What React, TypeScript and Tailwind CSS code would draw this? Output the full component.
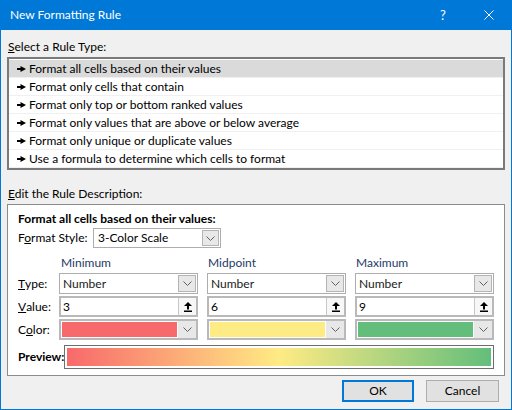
import React from 'react';

const ListArrow = () => (
  <svg width="9" height="6" viewBox="0 0 9 6" className="shrink-0">
    <rect x="0" y="2" width="4" height="2" fill="#000" />
    <path d="M3.5 0L9 3L3.5 6Z" fill="#000" />
  </svg>
);

const Chevron = () => (
  <svg width="9" height="5" viewBox="0 0 9 5">
    <path d="M0.5 0.5L4.5 4.5L8.5 0.5" fill="none" stroke="#606060" strokeWidth="1" />
  </svg>
);

const UpIcon = () => (
  <svg width="8" height="10" viewBox="0 0 8 10">
    <path d="M4 0L8 4H5V7.5H3V4H0Z" fill="#000" />
    <rect x="0" y="8.5" width="8" height="1.5" fill="#000" />
  </svg>
);

const Combo = ({ text }: { text: string }) => (
  <div className="flex h-[21px] items-stretch border border-[#adadad] bg-white">
    <div className="flex flex-1 items-center pl-[3px] text-[#1a1a1a]">{text}</div>
    <div className="m-[1px] flex w-[18px] items-center justify-center border border-[#b4b4b4] bg-[#e8e8e8]">
      <Chevron />
    </div>
  </div>
);

const ValueField = ({ text }: { text: string }) => (
  <div className="flex h-[21px] items-stretch border-2 border-[#b9b9b9] bg-white">
    <div className="flex flex-1 items-center pl-[2px]">{text}</div>
    <div className="flex w-[18px] items-center justify-center border-l border-[#c8c8c8] bg-[#f7f7f7]">
      <UpIcon />
    </div>
  </div>
);

const ColorField = ({ color }: { color: string }) => (
  <div className="flex h-[21px] items-stretch border-2 border-[#b9b9b9] bg-white">
    <div className="flex-1 p-[1px]">
      <div className={`h-full w-full ${color}`} />
    </div>
    <div className="flex w-[18px] items-center justify-center bg-[#e8e8e8]">
      <Chevron />
    </div>
  </div>
);

const rules = [
  'Format all cells based on their values',
  'Format only cells that contain',
  'Format only top or bottom ranked values',
  'Format only values that are above or below average',
  'Format only unique or duplicate values',
  'Use a formula to determine which cells to format',
];

export default function App() {
  return (
    <div className="flex h-[410px] w-[512px] flex-col border-x border-b border-[#0078d7] bg-[#f0f0f0] font-['Lato',sans-serif] text-[12px] leading-[16px] text-black">
      {/* title bar */}
      <div className="-mx-px flex h-[30px] shrink-0 items-center bg-[#0078d7] text-white">
        <div className="flex-1 pl-[10px] text-[12px]">New Formatting Rule</div>
        <div className="flex h-full w-[46px] items-center justify-center text-[13px]">?</div>
        <div className="flex h-full w-[46px] items-center justify-center">
          <svg width="10" height="10" viewBox="0 0 10 10">
            <path d="M0.5 0.5L9.5 9.5M9.5 0.5L0.5 9.5" stroke="#fff" strokeWidth="1" />
          </svg>
        </div>
      </div>

      <div className="flex flex-1 flex-col px-[6px]">
        <div className="mt-[9px] h-[16px] pl-[1px]">
          <span className="underline">S</span>elect a Rule Type:
        </div>
        <div className="mt-[2px] border-2 border-[#7a7a7a] bg-white pt-[1px]">
          {rules.map((r, i) => (
            <div
              key={r}
              className={`flex h-[18px] items-center gap-[3px] border-b border-[#f0f0f0] pl-[8px] ${i === 0 ? 'bg-[#dadada]' : ''}`}
            >
              <ListArrow />
              <span>{r}</span>
            </div>
          ))}
        </div>

        <div className="mt-[16px] h-[16px] pl-[1px]">
          <span className="underline">E</span>dit the Rule Description:
        </div>
        <div className="mt-[2px] border border-[#8c8c8c] bg-white px-[10px] pb-[6px] pt-[6px]">
          <div className="h-[16px] font-bold">Format all cells based on their values:</div>
          <div className="mt-[1px] flex h-[20px] items-center">
            <div className="w-[75px]">
              F<span className="underline">o</span>rmat Style:
            </div>
            <div className="w-[128px]">
              <div className="flex h-[20px] items-stretch border border-[#adadad] bg-white">
                <div className="flex flex-1 items-center pl-[4px]">3-Color Scale</div>
                <div className="m-[1px] flex w-[17px] items-center justify-center border border-[#b4b4b4] bg-[#e8e8e8]">
                  <Chevron />
                </div>
              </div>
            </div>
          </div>

          <div className="mt-[7px] grid grid-cols-[32px_139px_139px_139px] gap-x-[9px] gap-y-[2px]">
            <div className="h-[16px]" />
            <div className="h-[16px] pl-[2px] text-[#1e3a66]">Minimum</div>
            <div className="h-[16px] pl-[1px] text-[#1e3a66]">Midpoint</div>
            <div className="h-[16px] pl-[1px] text-[#1e3a66]">Maximum</div>

            <div className="-mr-[9px] flex h-[21px] items-center">
              <span className="underline">T</span>ype:
            </div>
            <Combo text="Number" />
            <Combo text="Number" />
            <Combo text="Number" />

            <div className="-mr-[9px] flex h-[21px] items-center">
              <span className="underline">V</span>alue:
            </div>
            <ValueField text="3" />
            <ValueField text="6" />
            <ValueField text="9" />

            <div className="-mr-[9px] flex h-[21px] items-center">
              C<span className="underline">o</span>lor:
            </div>
            <ColorField color="bg-[#f8696b]" />
            <ColorField color="bg-[#ffeb84]" />
            <ColorField color="bg-[#63be7b]" />
          </div>

          <div className="mt-[5px] flex h-[24px] items-center">
            <div className="w-[46px] font-bold">Preview:</div>
            <div className="h-[24px] flex-1 border border-[#6e6e6e] bg-white p-[2px]">
              <div className="h-full w-full bg-[linear-gradient(to_right,#f8696b,#ffeb84,#63be7b)]" />
            </div>
          </div>
        </div>

        <div className="mt-[4px] flex justify-end gap-[12px] pr-[6px]">
          <button className="flex h-[22px] w-[72px] items-center justify-center border-2 border-[#0078d7] bg-[#e1e1e1]">
            OK
          </button>
          <button className="flex h-[22px] w-[73px] items-center justify-center border border-[#adadad] bg-[#e1e1e1]">
            Cancel
          </button>
        </div>
      </div>
    </div>
  );
}
